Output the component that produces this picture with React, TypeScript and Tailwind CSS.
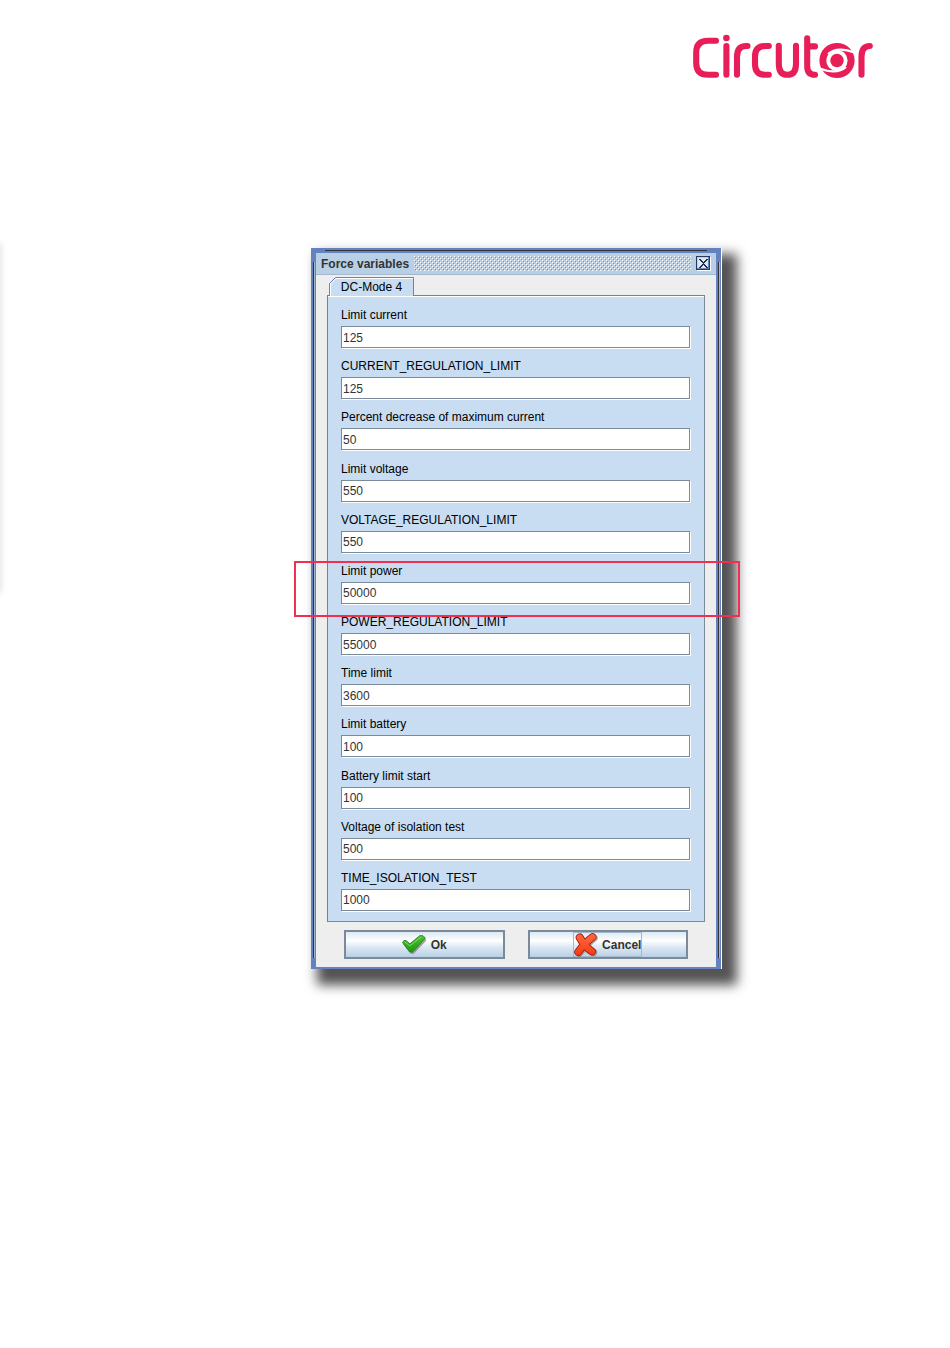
import React from "react";

type Field = { id: string; label: string; value: string; highlighted?: boolean };

const fields: Field[] = [
  { id: "limit-current", label: "Limit current", value: "125" },
  { id: "current-regulation", label: "CURRENT_REGULATION_LIMIT", value: "125" },
  { id: "percent-decrease", label: "Percent decrease of maximum current", value: "50" },
  { id: "limit-voltage", label: "Limit voltage", value: "550" },
  { id: "voltage-regulation", label: "VOLTAGE_REGULATION_LIMIT", value: "550" },
  { id: "limit-power", label: "Limit power", value: "50000", highlighted: true },
  { id: "power-regulation", label: "POWER_REGULATION_LIMIT", value: "55000" },
  { id: "time-limit", label: "Time limit", value: "3600" },
  { id: "limit-battery", label: "Limit battery", value: "100" },
  { id: "battery-start", label: "Battery limit start", value: "100" },
  { id: "isolation-voltage", label: "Voltage of isolation test", value: "500" },
  { id: "isolation-time", label: "TIME_ISOLATION_TEST", value: "1000" },
];

function Logo() {
  return (
    <svg width="182" height="46" viewBox="692 34 182 46" role="img" aria-label="Circutor">
      <g fill="none" stroke="#e81e59" strokeWidth="6.1" strokeLinecap="round" strokeLinejoin="round">
        <path d="M716 40.8H708Q696.2 40.8 696.2 52.6V63Q696.2 74.8 708 74.8H716" />
        <path d="M726.4 46V74.800" />
        <path d="M737 74.800V57Q737 46 746 46H747.500" />
        <path d="M768.800 46H765Q755 46 755 56.6V64Q755 74.8 765 74.8H768.800" />
        <path d="M778.800 45.800V64Q778.800 74.800 787.400 74.800Q796 74.800 796 64V45.800" />
        <path d="M807.200 38.200V66Q807.200 74.800 815 74.800M807.200 46.4H815" />
        <path d="M861.500 74.800V57Q861.500 46 869.800 46" />
      </g>
      <circle cx="726.4" cy="38" r="3.3" fill="#e81e59" />
      <circle cx="837" cy="60.5" r="17.600" fill="#e81e59" />
      <circle cx="837" cy="60.5" r="10.600" fill="#fff" />
      <path d="M828 54Q837 46 854.500 52.500M846 67Q837 75 819.500 68.500" fill="none" stroke="#fff" strokeWidth="2.200" />
      <circle cx="837" cy="60.5" r="6.7" fill="#e81e59" />
    </svg>
  );
}

function CheckIcon() {
  return (
    <svg width="26" height="22" viewBox="0 0 26 22" aria-hidden="true">
      <defs>
        <linearGradient id="check-fill" x1="0" y1="0" x2="0" y2="1">
          <stop offset="0" stopColor="#4cc42c" />
          <stop offset="1" stopColor="#1f9a12" />
        </linearGradient>
      </defs>
      <path d="M1 10L8.500 12L19 3.500Q23 2 24.300 6.500L12.500 19Q10 21 7.500 18.500Z" fill="#666" opacity=".6" />
      <path d="M.5 8.500Q2 5.300 4.200 6.700L7.900 9.800L17.700 1.700Q21.500 .5 23.300 4L11.500 17Q9 19.500 7.200 17.300Z" fill="url(#check-fill)" stroke="#277a1c" strokeWidth=".8" />
      <path d="M2.500 7.800L7.800 11.800L19.500 2.800" fill="none" stroke="#93e57a" strokeWidth="1" opacity=".8" />
    </svg>
  );
}

function CrossIcon() {
  return (
    <svg width="24" height="24" viewBox="0 0 24 24" aria-hidden="true">
      <defs>
        <linearGradient id="cross-fill" x1="0" y1="0" x2="0" y2="24" gradientUnits="userSpaceOnUse">
          <stop offset="0" stopColor="#ff6a45" />
          <stop offset="1" stopColor="#f5380c" />
        </linearGradient>
      </defs>
      <g fill="none" strokeLinecap="round" strokeLinejoin="round">
        <path d="M6.500 5Q12 15 19.500 19.500M20 5Q12 11 5.500 20" stroke="#666" strokeWidth="7.500" opacity=".5" />
        <path d="M5.700 4.500Q10.500 13.500 18 18.500M18.500 4.300Q10.500 10 4.300 19" stroke="#a81c0c" strokeWidth="8" />
        <path d="M5.700 4.500Q10.500 13.500 18 18.500M18.500 4.300Q10.500 10 4.300 19" stroke="url(#cross-fill)" strokeWidth="6.300" />
      </g>
    </svg>
  );
}

function TitleTexture() {
  return (
    <svg className="h-[15px] min-w-0 flex-1" aria-hidden="true" shapeRendering="crispEdges">
      <defs>
        <pattern id="bumps" width="4" height="4" patternUnits="userSpaceOnUse">
          <path d="M0 0h1v1h-1zM2 2h1v1h-1z" fill="#fff" />
          <path d="M1 1h1v1h-1zM3 3h1v1h-1z" fill="#7391c8" />
        </pattern>
      </defs>
      <rect width="100%" height="100%" fill="url(#bumps)" />
    </svg>
  );
}

function FieldRow({ field }: { field: Field }) {
  return (
    <div className="relative flex flex-col gap-[3px]">
      <label htmlFor={field.id} className="text-xs leading-[15px] text-black">
        {field.label}
      </label>
      <input
        id={field.id}
        type="text"
        defaultValue={field.value}
        className="h-[22px] w-full border border-[#7a8a99] bg-white px-px pt-px text-xs text-[#333] shadow-[1px_1px_0_#fff] outline-none"
      />
      {field.highlighted && (
        <div className="pointer-events-none absolute -top-[3px] -right-[50px] -bottom-[13px] -left-[47px] z-10 border-2 border-[#f02f53]" />
      )}
    </div>
  );
}

const buttonClass =
  "flex h-[29px] flex-1 items-center justify-center border-2 border-[#7a8a99] bg-[linear-gradient(#dde8f3,#ffffff_35%,#dde8f3_60%,#b8cfe5)] text-xs font-bold text-[#333]";

export default function App() {
  return (
    <div className="relative min-h-screen overflow-hidden bg-white pb-12 font-['Liberation_Sans',Arial,sans-serif]">
      <div className="absolute top-[244px] -left-2 h-[348px] w-2 shadow-[0_0_6px_1px_#e0e0e0]" />
      <header className="flex justify-end pt-[34px] pr-[76px]">
        <Logo />
      </header>
      <main className="mt-[168px] pl-[311px]">
        <section
          aria-label="Force variables"
          className="relative flex w-[410px] flex-col border-[5px] border-b-2 border-[#6382bf] bg-[#eee] shadow-[1px_0_0_#fff,11px_11px_11px_5px_#555353]"
        >
          <span className="absolute -top-[3px] right-[9px] left-[9px] h-px bg-[#333]" />
          <span className="absolute top-[9px] bottom-[9px] -left-[3px] w-[2px] border-r border-l border-r-[#a3b8cc] border-l-[#333]" />
          <span className="absolute top-[9px] -right-[4px] bottom-[9px] w-[2px] border-r border-l border-r-[#a3b8cc] border-l-[#333]" />
          <div className="flex h-[22px] items-center gap-[5px] border-b border-[#a3b8cc] bg-[#b8cfe5] pr-[5px] pl-[5px]">
            <h1 className="text-xs font-bold text-[#333]">Force variables</h1>
            <TitleTexture />
            <button type="button" aria-label="Close" className="flex size-[15px] items-center justify-center">
              <svg width="15" height="15" viewBox="0 0 15 15" shapeRendering="crispEdges" aria-hidden="true">
                <path d="M1 1h14v14H1z" fill="#fff" />
                <path d="M.5.5h13v13H.5z" fill="#b8cfe5" stroke="#27395f" />
                <path d="M1 12h12v1H1zM12 1h1v12h-1z" fill="#6382bf" />
                <path d="M2 2h10v10H2z" fill="#dce8f4" />
                <path d="M3 3h2v1h1v1h1v1h1v-1h1v-1h1v-1h2v1h-1v1h-1v1h-1v1h-1v1h1v1h1v1h1v1h1v1h-2v-1h-1v-1h-1v-1h-1v1h-1v1h-1v1h-2v-1h1v-1h1v-1h1v-1h1v-1h-1v-1h-1v-1h-1v-1h-1z" fill="#222c45" />
              </svg>
            </button>
          </div>

          <div className="px-[11px] pt-[2px]">
            <div role="tablist" className="relative z-10 -mb-px flex pl-[2px]">
              <button type="button" role="tab" aria-selected="true" className="relative h-[19px] w-[85px] text-xs text-black">
                <svg className="absolute inset-0" width="85" height="19" viewBox="0 0 85 19" aria-hidden="true">
                  <path d="M.5 19V6.500L6.500.5H84.500V19" fill="#c8ddf2" stroke="#6382bf" />
                  <path d="M1.500 19V7L7 1.500H84" fill="none" stroke="#fff" />
                </svg>
                <span className="relative">DC-Mode 4</span>
              </button>
            </div>
            <div
              role="tabpanel"
              className="flex min-h-[627px] flex-col justify-between border border-t-[#6382bf] border-r-[#7a8a99] border-b-[#7a8a99] border-l-[#6382bf] bg-[#c8ddf2] pt-3 pr-[14px] pb-[10px] pl-[13px] shadow-[inset_0_1px_0_#fff]"
            >
              {fields.map((field) => (
                <FieldRow key={field.id} field={field} />
              ))}
            </div>
          </div>

          <div className="flex gap-[23px] px-7 pt-2 pb-2">
            <button type="button" className={buttonClass}>
              <CheckIcon />
              <span className="pl-[3px]">Ok</span>
            </button>
            <button type="button" className={buttonClass}>
              <span className="flex h-[25px] items-center gap-1 border border-[#a3b8cc]">
                <CrossIcon />
                Cancel
              </span>
            </button>
          </div>
        </section>
      </main>
    </div>
  );
}
